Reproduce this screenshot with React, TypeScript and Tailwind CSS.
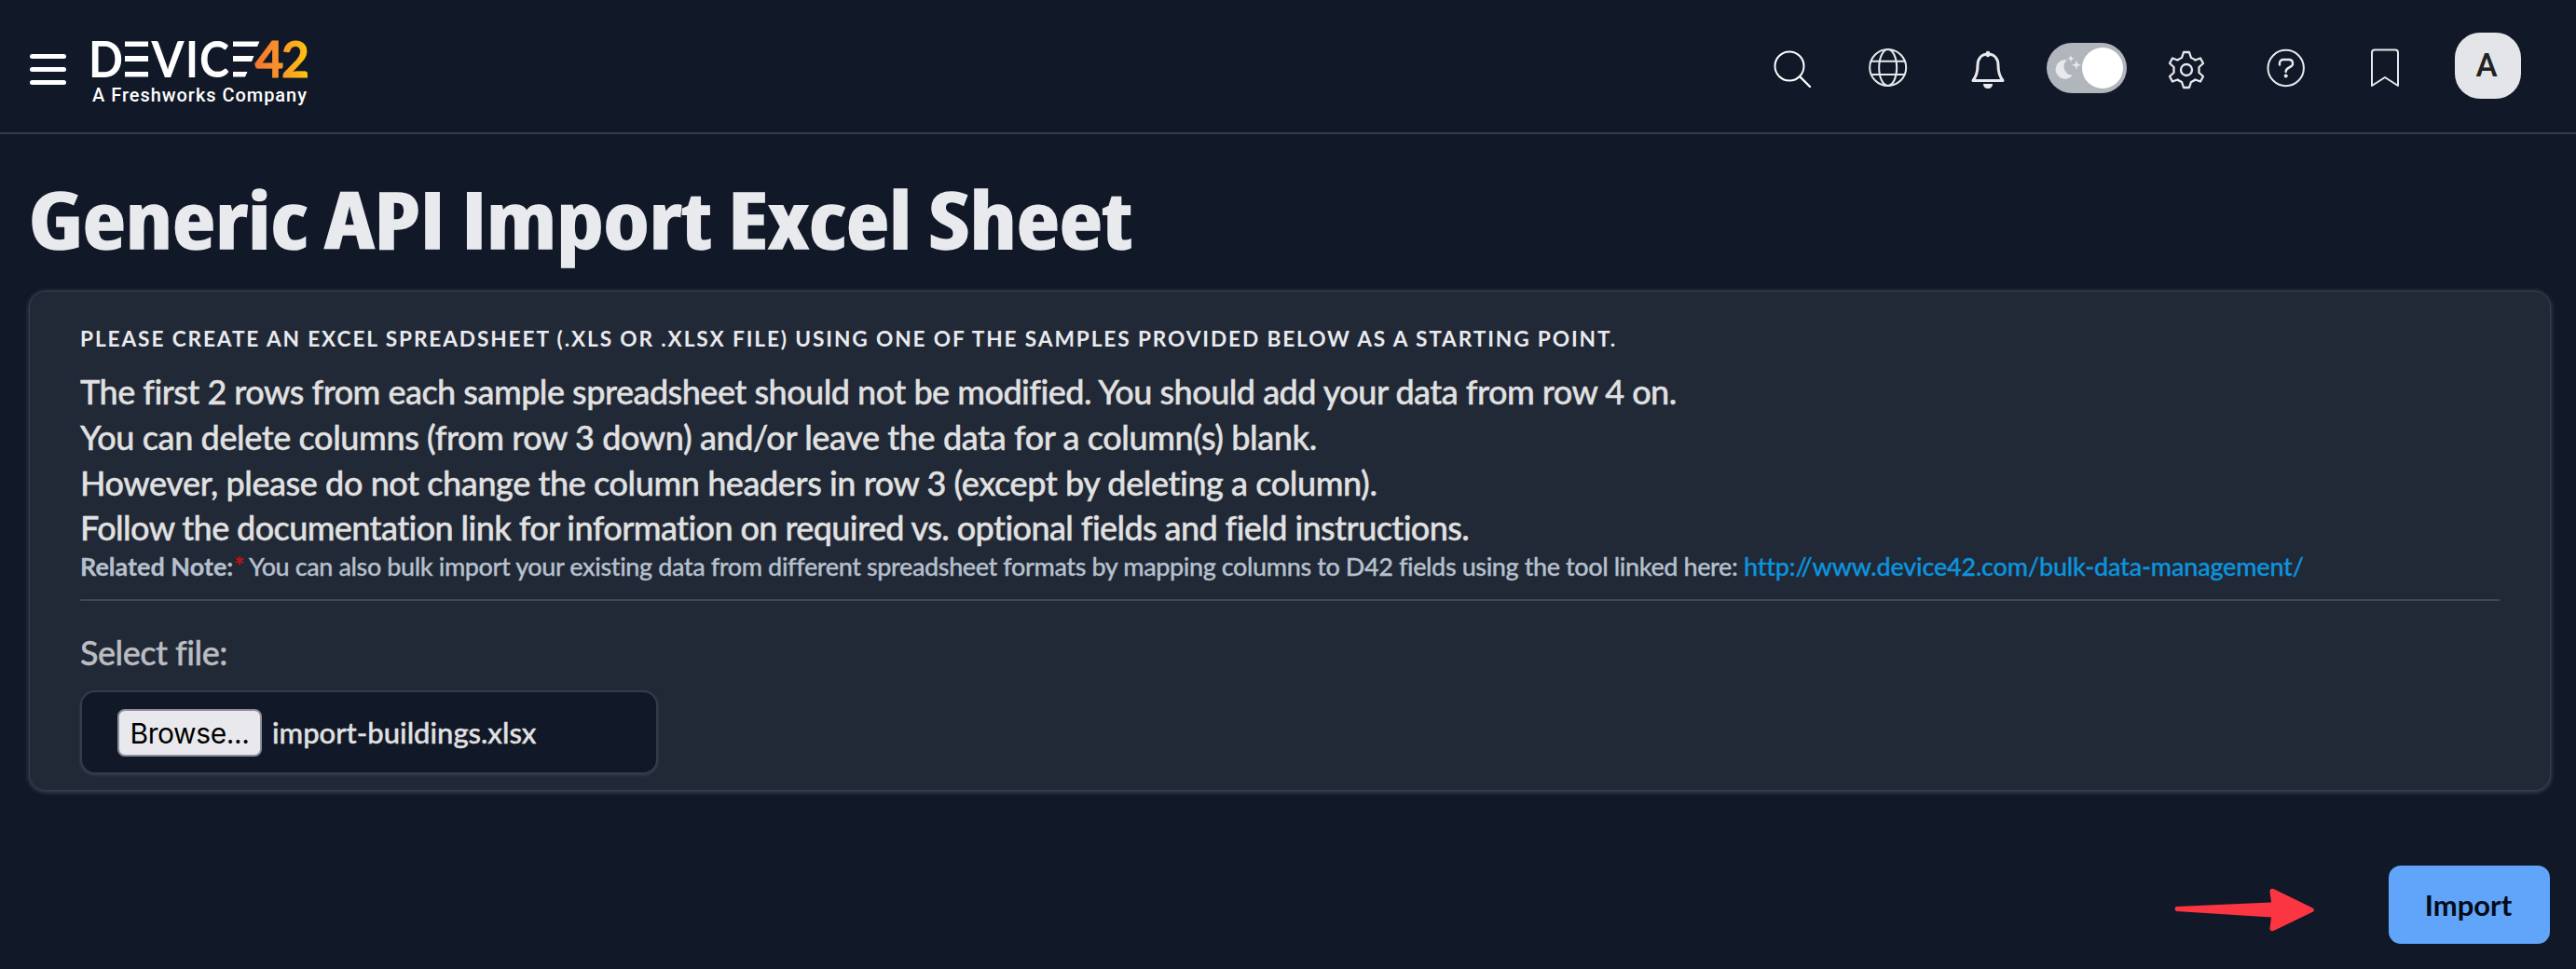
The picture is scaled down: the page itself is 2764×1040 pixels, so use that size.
import type { ReactNode } from "react";

function Icon({ children, className = "" }: { children: ReactNode; className?: string }) {
  return (
    <svg
      viewBox="0 0 48 48"
      className={"h-12 w-12 shrink-0 overflow-visible " + className}
      fill="none"
      stroke="#e8e9ed"
      strokeWidth="2"
      strokeLinecap="round"
      strokeLinejoin="round"
    >
      {children}
    </svg>
  );
}

function Logo() {
  return (
    <svg viewBox="0 0 236 76" className="ml-[24px] h-[76px] w-[236px] overflow-visible font-[Lato,sans-serif] text-[54px] font-bold" fill="#fff">
      <defs>
        <linearGradient id="logo42" gradientUnits="userSpaceOnUse" x1="180" y1="0" x2="236" y2="0">
          <stop offset="0" stopColor="#f4772e" />
          <stop offset="0.5" stopColor="#f9982a" />
          <stop offset="1" stopColor="#ffc60b" />
        </linearGradient>
      </defs>
      <text x="0" y="49" textLength="37" lengthAdjust="spacingAndGlyphs">D</text>
      <path d="M39 10.500h25v5.500h-25zM39 26h25v6h-25zM39 43h25v5.500h-25z" />
      <text x="67.500" y="49" textLength="35" lengthAdjust="spacingAndGlyphs">V</text>
      <text x="104" y="49" textLength="14" lengthAdjust="spacingAndGlyphs">I</text>
      <text x="119" y="49" textLength="32" lengthAdjust="spacingAndGlyphs">C</text>
      <path d="M155 10.500h28.500l-2.500 5.500h-26zM155 26h22.500l-2.500 6h-20zM155 43h15.500l-2.500 5.500h-13z" />
      <g fill="url(#logo42)" stroke="url(#logo42)" strokeWidth="0.800">
        <text x="178.500" y="49" textLength="31" lengthAdjust="spacingAndGlyphs">4</text>
        <text x="207" y="49" textLength="30" lengthAdjust="spacingAndGlyphs">2</text>
      </g>
      <text x="4" y="75" textLength="230" className="font-[Roboto,sans-serif] text-[20px] font-medium">
        A Freshworks Company
      </text>
    </svg>
  );
}

function Header() {
  return (
    <header className="flex h-[144px] items-start border-b-2 border-[#363c4a]">
      <button aria-label="Menu" className="mt-[58px] ml-8 flex flex-col gap-[9px]">
        <span className="block h-[5px] w-[39px] rounded-full bg-white" />
        <span className="block h-[5px] w-[39px] rounded-full bg-white" />
        <span className="block h-[5px] w-[39px] rounded-full bg-white" />
      </button>
      <div className="mt-[34px]">
        <Logo />
      </div>
      <div className="mt-[35px] mr-[59px] ml-auto flex h-[71px] items-center">
        <Icon className="mr-[56px]">
          <circle cx="22" cy="24" r="15.500" stroke="#fff" />
          <path d="M33 35 44 46" stroke="#fff" strokeWidth="2.400" />
        </Icon>
        <Icon className="mr-[59px]">
          <circle cx="23.700" cy="25.500" r="19.500" />
          <ellipse cx="23.700" cy="25.500" rx="9.500" ry="19.500" />
          <path d="M6 18.700h35.400M6 33h35.400" />
        </Icon>
        <Icon className="mr-[39px]">
          <path d="M24 11c-7 0-11 5-11 12 0 8-1.500 12-5 16.500h32c-3.500-4.500-5-8.500-5-16.500 0-7-4-12-11-12z" strokeWidth="3" />
          <path d="M24 10v2" strokeWidth="4.500" />
          <path d="M19 43h10c0 3-2 5-5 5s-5-2-5-5z" fill="#e8e9ed" stroke="none" />
        </Icon>
        <div className="mt-[4px] mr-10 flex h-[54px] w-[86px] items-center justify-between rounded-full bg-[#b1b5bc] pr-1 pl-[10px]">
          <svg viewBox="0 0 28 28" className="h-7 w-7 overflow-visible" fill="#e8e9ed">
            <path d="M12 5.500A10.200 10.200 0 1 0 18 21.500 9 9 0 0 1 12 5.500z" />
            <path d="M16 0l1 2.800 2.800 1-2.800 1-1 2.800-1-2.800-2.800-1 2.800-1zM22 5.500l1.300 3.900 3.900 1.300-3.900 1.300L22 15.900l-1.300-3.900-3.900-1.300 3.900-1.300z" />
          </svg>
          <span className="block h-11 w-11 rounded-full bg-white" />
        </div>
        <Icon className="mr-[59px]">
          <g transform="translate(24 28)" strokeWidth="2.300">
            <path d="M-3-19H3L5-13Q7.500-12 9.500-10.500L15-12.500 18-7 13.500-3V3L18 7 15 12.500 9.500 10.500Q7.500 12 5 13L3 19H-3L-5 13Q-7.500 12-9.500 10.500L-15 12.500-18 7-13.500 3V-3L-18-7-15-12.500-9.500-10.500Q-7.500-12-5-13Z" />
            <circle r="6" />
          </g>
        </Icon>
        <Icon className="mr-[58px]">
          <circle cx="23.700" cy="26" r="19.200" />
          <path d="M17 22.500V21c0-2.500 1.500-4 4-4h6c2.500 0 4 1.500 4 4v1c0 3-7.300 3.500-7.300 7.500v.5" strokeWidth="2.400" />
          <circle cx="23.700" cy="34.500" r="2" fill="#e8e9ed" stroke="none" />
        </Icon>
        <Icon className="mr-[51px]">
          <path d="M10 45V9.500a3 3 0 0 1 3-3h22a3 3 0 0 1 3 3V45L24 36z" />
        </Icon>
        <div className="flex h-[71px] w-[71px] items-center justify-center rounded-[27px] bg-[#e4e5e9] pr-[3px] font-[Roboto,sans-serif] text-[35px] leading-none font-medium text-[#222]">
          A
        </div>
      </div>
    </header>
  );
}

export default function App() {
  return (
    <div className="flex h-[1040px] w-[2764px] flex-col overflow-hidden bg-[#111827] font-[Lato,sans-serif] whitespace-nowrap">
      <Header />
      <h1 className="mt-[36px] ml-[31px] h-[110px] w-fit origin-left scale-x-[1.197] font-['Open_Sans'] text-[84px] leading-[110px] font-bold text-[#e9eaee] [-webkit-text-stroke:1.600px] [font-stretch:75%]">
        Generic API Import Excel Sheet
      </h1>
      <main className="mt-[22px] mr-[27px] ml-[31px] h-[537px] rounded-[18px] border border-[#383e4a] bg-[#212937] pt-[35px] pr-[54px] pl-[54px] shadow-[0_1px_4px_1px_#383e4a]">
        <h2 className="text-[22.700px] leading-[32px] font-bold tracking-[1.860px] text-[#e9eaee] uppercase">
          Please create an Excel spreadsheet (.xls or .xlsx file) using one of the samples provided below as a starting point.
        </h2>
        <div className="mt-[16px] text-[36px] leading-[48.750px] font-medium text-[#e1e1e1] [-webkit-text-stroke:0.400px]">
          <p className="tracking-[-0.520px]">The first 2 rows from each sample spreadsheet should not be modified. You should add your data from row 4 on.</p>
          <p className="tracking-[-0.410px]">You can delete columns (from row 3 down) and/or leave the data for a column(s) blank.</p>
          <p className="tracking-[-0.430px]">However, please do not change the column headers in row 3 (except by deleting a column).</p>
          <p className="tracking-[-0.610px]">Follow the documentation link for information on required vs. optional fields and field instructions.</p>
        </div>
        <p className="-mt-px flex text-[27px] leading-[36px] font-medium text-[#b6c0cd] [-webkit-text-stroke:0.300px]">
          <b className="w-[165px] font-bold">Related Note:</b>
          <span className="w-[16px] text-[#c8100e]">*</span>
          <span className="w-[1604px] tracking-[-0.400px]">
            You can also bulk import your existing data from different spreadsheet formats by mapping columns to D42 fields using the tool linked here:
          </span>
          <a className="tracking-[-0.200px] text-[#0c94de]">http://www.device42.com/bulk-data-management/</a>
        </p>
        <hr className="mt-[17px] border-t-2 border-[#3f4755]" />
        <label className="mt-[33px] block text-[36px] leading-[44px] font-medium tracking-[-0.500px] text-[#bcbdc0] [-webkit-text-stroke:0.400px]">Select file:</label>
        <div className="mt-[19px] flex h-[90px] w-[620px] items-center rounded-[16px] border-2 border-[#343c49] bg-[#111827] pl-[38px] shadow-[0_1px_3px_#3b424e]">
          <button className="h-[51px] w-[155px] rounded-[8px] border-2 border-[#8f8f9d] bg-[#e9e9ed] pt-px font-[Inter,sans-serif] text-[30px] leading-none tracking-[-0.400px] text-black">
            Browse...
          </button>
          <span className="ml-[11px] text-[31px] font-medium text-[#e1e1e1] [-webkit-text-stroke:0.400px]">import-buildings.xlsx</span>
        </div>
      </main>
      <div className="mt-[80px] mr-[28px] flex items-start justify-end">
        <svg viewBox="0 0 152 48" className="mt-[24px] mr-[79px] h-12 w-[152px]" fill="#fb3541">
          <path d="M3 20 105 15.500 103.500 4Q103.500 0 107.500 1L149.500 21.500Q152.500 24 149.500 25.700L107.500 46Q103 47 103.500 43L105 31.500 3 25Q0 22.500 3 20Z" />
        </svg>
        <button className="h-[84px] w-[173px] rounded-[13px] bg-[#60a5fa] pr-[2px] text-[31px] font-bold text-[#050b18]">Import</button>
      </div>
    </div>
  );
}
